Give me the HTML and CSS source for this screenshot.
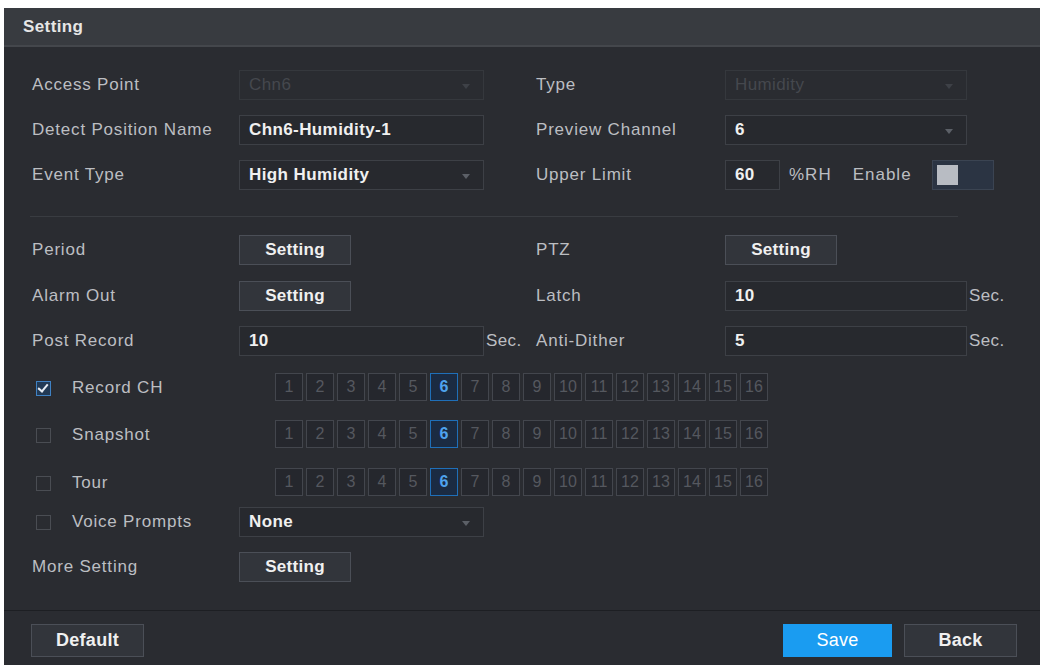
FILE: index.html
```html
<!DOCTYPE html>
<html lang="en">
<head>
  <meta charset="UTF-8">
  <title>Setting</title>
  <link rel="stylesheet" href="styles.css">
</head>
<body>
  <div class="window">
    <div class="title">Setting</div>

    <div class="content">
      <div class="form">
        <div class="label">Access Point</div>
        <div class="select disabled">Chn6</div>
        <div></div>
        <div class="label">Type</div>
        <div class="select disabled">Humidity</div>
        <div></div>

        <div class="label">Detect Position Name</div>
        <div class="input">Chn6-Humidity-1</div>
        <div></div>
        <div class="label">Preview Channel</div>
        <div class="select">6</div>
        <div></div>

        <div class="label">Event Type</div>
        <div class="select">High Humidity</div>
        <div></div>
        <div class="label">Upper Limit</div>
        <div class="limit">
          <div class="input small">60</div>
          <span class="unit">%RH</span>
          <span class="unit enable">Enable</span>
          <div class="toggle"><span class="knob"></span></div>
        </div>
      </div>

      <div class="divider"></div>

      <div class="form lower">
        <div class="label">Period</div>
        <div><button class="btn">Setting</button></div>
        <div></div>
        <div class="label">PTZ</div>
        <div><button class="btn">Setting</button></div>
        <div></div>

        <div class="label">Alarm Out</div>
        <div><button class="btn">Setting</button></div>
        <div></div>
        <div class="label">Latch</div>
        <div class="input">10</div>
        <div class="suffix">Sec.</div>

        <div class="label">Post Record</div>
        <div class="input">10</div>
        <div class="suffix">Sec.</div>
        <div class="label">Anti-Dither</div>
        <div class="input">5</div>
        <div class="suffix">Sec.</div>

        <div class="label check-label"><span class="checkbox checked"></span>Record CH</div>
        <div class="channels" id="ch-record"></div>

        <div class="label check-label"><span class="checkbox"></span>Snapshot</div>
        <div class="channels" id="ch-snapshot"></div>

        <div class="label check-label"><span class="checkbox"></span>Tour</div>
        <div class="channels" id="ch-tour"></div>

        <div class="label check-label"><span class="checkbox"></span>Voice Prompts</div>
        <div class="select">None</div>
        <div class="rest"></div>

        <div class="label">More Setting</div>
        <div><button class="btn">Setting</button></div>
        <div class="rest"></div>
      </div>
    </div>

    <div class="footer">
      <button class="btn wide">Default</button>
      <div class="right">
        <button class="btn wide primary">Save</button>
        <button class="btn wide">Back</button>
      </div>
    </div>
  </div>

  <script>
    // fill the 16 channel boxes, channel 6 selected
    ['ch-record', 'ch-snapshot', 'ch-tour'].forEach(function (id) {
      var list = document.getElementById(id);
      for (var i = 1; i <= 16; i++) {
        var box = document.createElement('span');
        box.className = i === 6 ? 'ch active' : 'ch';
        box.textContent = i;
        list.appendChild(box);
      }
    });
  </script>
</body>
</html>
```

FILE: styles.css
```css
body {
  margin: 0;
  background: #fff;
  font-family: 'Liberation Sans', Arial, sans-serif;
}
.window {
  width: 1036px;
  height: 657px;
  margin: 8px 0 0 4px;
  background: #2a2c31;
  display: flex;
  flex-direction: column;
}
.title {
  height: 37px;
  line-height: 37px;
  padding-left: 19px;
  background: #383b40;
  border-bottom: 2px solid #44474c;
  color: #e6e6e6;
  font-size: 17px;
  font-weight: bold;
  letter-spacing: 0.4px;
}
.content {
  flex: 1;
  padding-top: 23px;
}
.form {
  display: grid;
  grid-template-columns: 207px 245px 52px 189px 242px 1fr;
  grid-auto-rows: 30px;
  row-gap: 15px;
  padding-left: 28px;
}
.form.lower {
  row-gap: 0;
  grid-template-rows: 46px 45px 47px 47px 48px 39px 45px 30px;
}
.form.lower > * {
  align-self: start;
}
.label {
  height: 30px;
  color: #bcbec2;
  font-size: 17px;
  letter-spacing: 0.8px;
  display: flex;
  align-items: center;
}
.input, .select {
  box-sizing: border-box;
  height: 30px;
  border: 1px solid #3d4046;
  background: #27292e;
  color: #f0f0f0;
  font-size: 17px;
  font-weight: bold;
  letter-spacing: 0.4px;
  padding-left: 9px;
  display: flex;
  align-items: center;
  position: relative;
}
.select::after {
  content: '';
  position: absolute;
  right: 13px;
  top: 13px;
  border-left: 4px solid transparent;
  border-right: 4px solid transparent;
  border-top: 5px solid #5c6067;
}
.select.disabled {
  color: #45484e;
  font-weight: normal;
  background: #2a2c31;
  border-color: #35383d;
}
.select.disabled::after {
  border-top-color: #3e4147;
}
.suffix {
  height: 30px;
  color: #bcbec2;
  font-size: 17px;
  letter-spacing: 0.4px;
  display: flex;
  align-items: center;
  padding-left: 2px;
}
.limit {
  grid-column: 5 / span 2;
  display: flex;
  align-items: center;
}
.input.small {
  width: 55px;
}
.unit {
  color: #bcbec2;
  font-size: 17px;
  letter-spacing: 1px;
  margin-left: 9px;
}
.unit.enable {
  margin-left: 21px;
}
.toggle {
  box-sizing: border-box;
  width: 62px;
  height: 30px;
  margin-left: 20px;
  border: 1px solid #3b4452;
  background: #2b3443;
  padding: 4px;
}
.knob {
  display: block;
  width: 21px;
  height: 20px;
  background: #b8bcc3;
}
.divider {
  height: 1px;
  background: #393c41;
  margin: 26px 82px 18px 26px;
}
.btn {
  box-sizing: border-box;
  height: 30px;
  width: 112px;
  border: 1px solid #4b4f57;
  background: #32353b;
  color: #f0f0f0;
  font-family: 'Liberation Sans', Arial, sans-serif;
  font-size: 17px;
  font-weight: bold;
  letter-spacing: 0.3px;
  padding: 0;
}
.check-label {
  padding-left: 4px;
}
.checkbox {
  box-sizing: border-box;
  width: 15px;
  height: 15px;
  border: 1px solid #4a4d53;
  margin-right: 21px;
  position: relative;
}
.checkbox.checked {
  border-color: #3f82c4;
  background: #223a55;
}
.checkbox.checked::after {
  content: '';
  position: absolute;
  left: 3px;
  top: 0px;
  width: 4px;
  height: 8px;
  border-right: 2px solid #e8eef5;
  border-bottom: 2px solid #e8eef5;
  transform: rotate(40deg);
}
.channels {
  grid-column: 2 / span 5;
  display: flex;
  gap: 3px;
  padding-left: 36px;
  height: 28px;
}
.ch {
  box-sizing: border-box;
  width: 28px;
  height: 28px;
  border: 1px solid #43464d;
  background: #25272d;
  color: #55585f;
  font-size: 16px;
  display: flex;
  align-items: center;
  justify-content: center;
}
.ch.active {
  border-color: #1f6fb8;
  background: #1b2b42;
  color: #4fa3ee;
  font-weight: bold;
}
.rest {
  grid-column: 3 / span 4;
}
.footer {
  border-top: 1px solid #1d1f23;
  padding: 13px 23px 8px 27px;
  display: flex;
  justify-content: space-between;
}
.footer .right {
  display: flex;
  gap: 12px;
}
.btn.wide {
  width: 113px;
  height: 33px;
  font-size: 18px;
}
.btn.primary {
  width: 109px;
  background: #1a9cf1;
  border-color: #1a9cf1;
  color: #fff;
  font-weight: normal;
}
```
